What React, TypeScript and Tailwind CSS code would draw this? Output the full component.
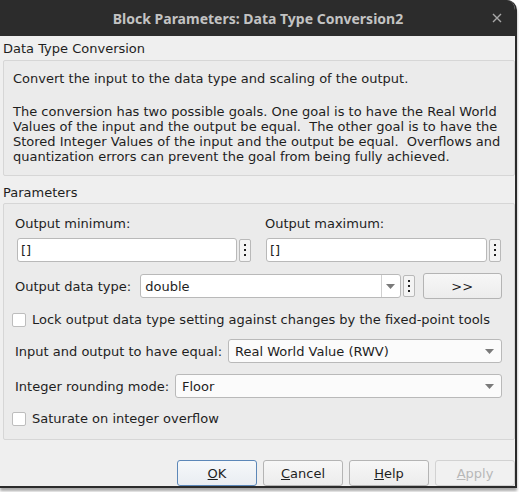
import React from 'react';

const FONT = "font-['DejaVu_Sans',sans-serif] text-[13px] leading-[15px] text-[#1e1e1e]";
const INPUT = 'h-[24px] bg-white border border-[#b9b9b9] rounded-[3px] flex items-center pl-[3px]';
const SELECT = 'h-[24px] bg-[#fbfbfb] border border-[#b9b9b9] rounded-[3px] flex items-center pl-[6px] pr-[7px]';
const BUTTON = 'w-[80px] h-[26px] rounded-[3px] border flex items-center justify-center';

const Dots = ({ tall = 23 }: { tall?: number }) => (
  <div
    className={`w-[12px] ${tall === 23 ? 'h-[23px]' : 'h-[22px]'} bg-[#f4f4f4] border border-[#b9b9b9] rounded-[2px] flex items-center justify-center shrink-0`}
  >
    <svg width="2" height="12" viewBox="0 0 2 12">
      <rect x="0" y="0" width="2" height="2" fill="#222" />
      <rect x="0" y="5" width="2" height="2" fill="#222" />
      <rect x="0" y="10" width="2" height="2" fill="#222" />
    </svg>
  </div>
);

const Arrow = () => (
  <svg width="9" height="5" viewBox="0 0 9 5" className="shrink-0">
    <path d="M0 0 L9 0 L4.5 5 Z" fill="#7a7a7a" />
  </svg>
);

const Checkbox = () => (
  <div className="w-[14px] h-[14px] bg-white border border-[#bdbdbd] rounded-[2px] shrink-0" />
);

const App = () => {
  return (
    <div className={`w-[519px] h-[492px] bg-white ${FONT}`}>
      <div className="w-[517px] h-[488px] flex flex-col border-r-2 border-b-[2px] border-[#2b2b2b] rounded-tr-[10px] overflow-hidden shadow-[0_3px_3px_rgba(0,0,0,0.35)]">
        {/* title bar */}
        <div className="h-[36px] bg-[#2c2c2c] flex items-center relative shrink-0">
          <div className="flex-1 text-center font-['Noto_Sans',sans-serif] font-bold text-[14px] text-[#c3c3c3] pl-[1px]">
            Block Parameters: Data Type Conversion2
          </div>
          <svg width="10" height="10" viewBox="0 0 10 10" className="absolute right-[13px] top-[13px]">
            <path d="M1 1 L9 9 M9 1 L1 9" stroke="#a8a8a8" strokeWidth="1.4" />
          </svg>
        </div>

        {/* body */}
        <div className="flex-1 bg-[#efefef] pt-[5px] pl-[3px]">
          <div>Data Type Conversion</div>

          <div className="mt-[4px] border border-[#d6d6d6] bg-[#ebebeb] rounded-[2px] pt-[10px] pb-[11px] pl-[9px] whitespace-pre">
            <div>Convert the input to the data type and scaling of the output.</div>
            <div className="mt-[18px]">
              <div>The conversion has two possible goals. One goal is to have the Real World</div>
              <div>Values of the input and the output be equal.  The other goal is to have the</div>
              <div>Stored Integer Values of the input and the output be equal.  Overflows and</div>
              <div>quantization errors can prevent the goal from being fully achieved.</div>
            </div>
          </div>

          <div className="mt-[9px]">Parameters</div>

          <div className="mt-[3px] border border-[#d6d6d6] bg-[#ebebeb] rounded-[2px] pt-[12px] pb-[13px] pl-[9px] pr-[12px]">
            <div className="grid grid-cols-[238px_236px] gap-x-[14px]">
              <div className="pl-[2px]">Output minimum:</div>
              <div>Output maximum:</div>
              <div className="mt-[7px] flex items-center gap-[2px] pl-[4px]">
                <div className={`${INPUT} w-[223px]`}>[]</div>
                <Dots />
              </div>
              <div className="mt-[7px] flex items-center gap-[2px] pl-[1px]">
                <div className={`${INPUT} w-[222px]`}>[]</div>
                <Dots />
              </div>
            </div>

            <div className="mt-[11px] flex items-center pl-[2px]">
              <div className="w-[126px]">Output data type:</div>
              <div className="w-[262px] h-[24px] bg-white border border-[#b9b9b9] rounded-[3px] flex items-center">
                <div className="flex-1 pl-[4px]">double</div>
                <div className="w-[19px] h-full border-l border-[#d0d0d0] flex items-center justify-center">
                  <Arrow />
                </div>
              </div>
              <div className="ml-[2px]">
                <Dots tall={22} />
              </div>
              <div className={`${BUTTON} ml-[8px] h-[25px] border-[#b4b4b4] bg-gradient-to-b from-[#f7f7f7] to-[#ececec]`}>
                &gt;&gt;
              </div>
            </div>

            <div className="mt-[13px] flex items-center gap-[6px] -ml-[1px]">
              <Checkbox />
              <div>Lock output data type setting against changes by the fixed-point tools</div>
            </div>

            <div className="mt-[12px] flex items-center pl-[2px]">
              <div className="w-[213px]">Input and output to have equal:</div>
              <div className={`${SELECT} flex-1 justify-between`}>
                <span>Real World Value (RWV)</span>
                <Arrow />
              </div>
            </div>

            <div className="mt-[11px] flex items-center pl-[2px]">
              <div className="w-[160px]">Integer rounding mode:</div>
              <div className={`${SELECT} flex-1 justify-between`}>
                <span>Floor</span>
                <Arrow />
              </div>
            </div>

            <div className="mt-[13px] flex items-center gap-[6px] -ml-[1px]">
              <Checkbox />
              <div>Saturate on integer overflow</div>
            </div>
          </div>

          <div className="mt-[20px] flex justify-end gap-[6px]">
            <div className={`${BUTTON} border-[#5c87b8] bg-gradient-to-b from-[#f6f8fa] to-[#e9edf2]`}>
              <span><u>O</u>K</span>
            </div>
            <div className={`${BUTTON} border-[#b4b4b4] bg-gradient-to-b from-[#f7f7f7] to-[#ececec]`}>
              <span><u>C</u>ancel</span>
            </div>
            <div className={`${BUTTON} border-[#b4b4b4] bg-gradient-to-b from-[#f7f7f7] to-[#ececec]`}>
              <span><u>H</u>elp</span>
            </div>
            <div className={`${BUTTON} border-[#d2d2d2] bg-[#f1f1f1] text-[#b8b8b8]`}>
              <span><u>A</u>pply</span>
            </div>
          </div>
        </div>
      </div>
    </div>
  );
};

export default App;
